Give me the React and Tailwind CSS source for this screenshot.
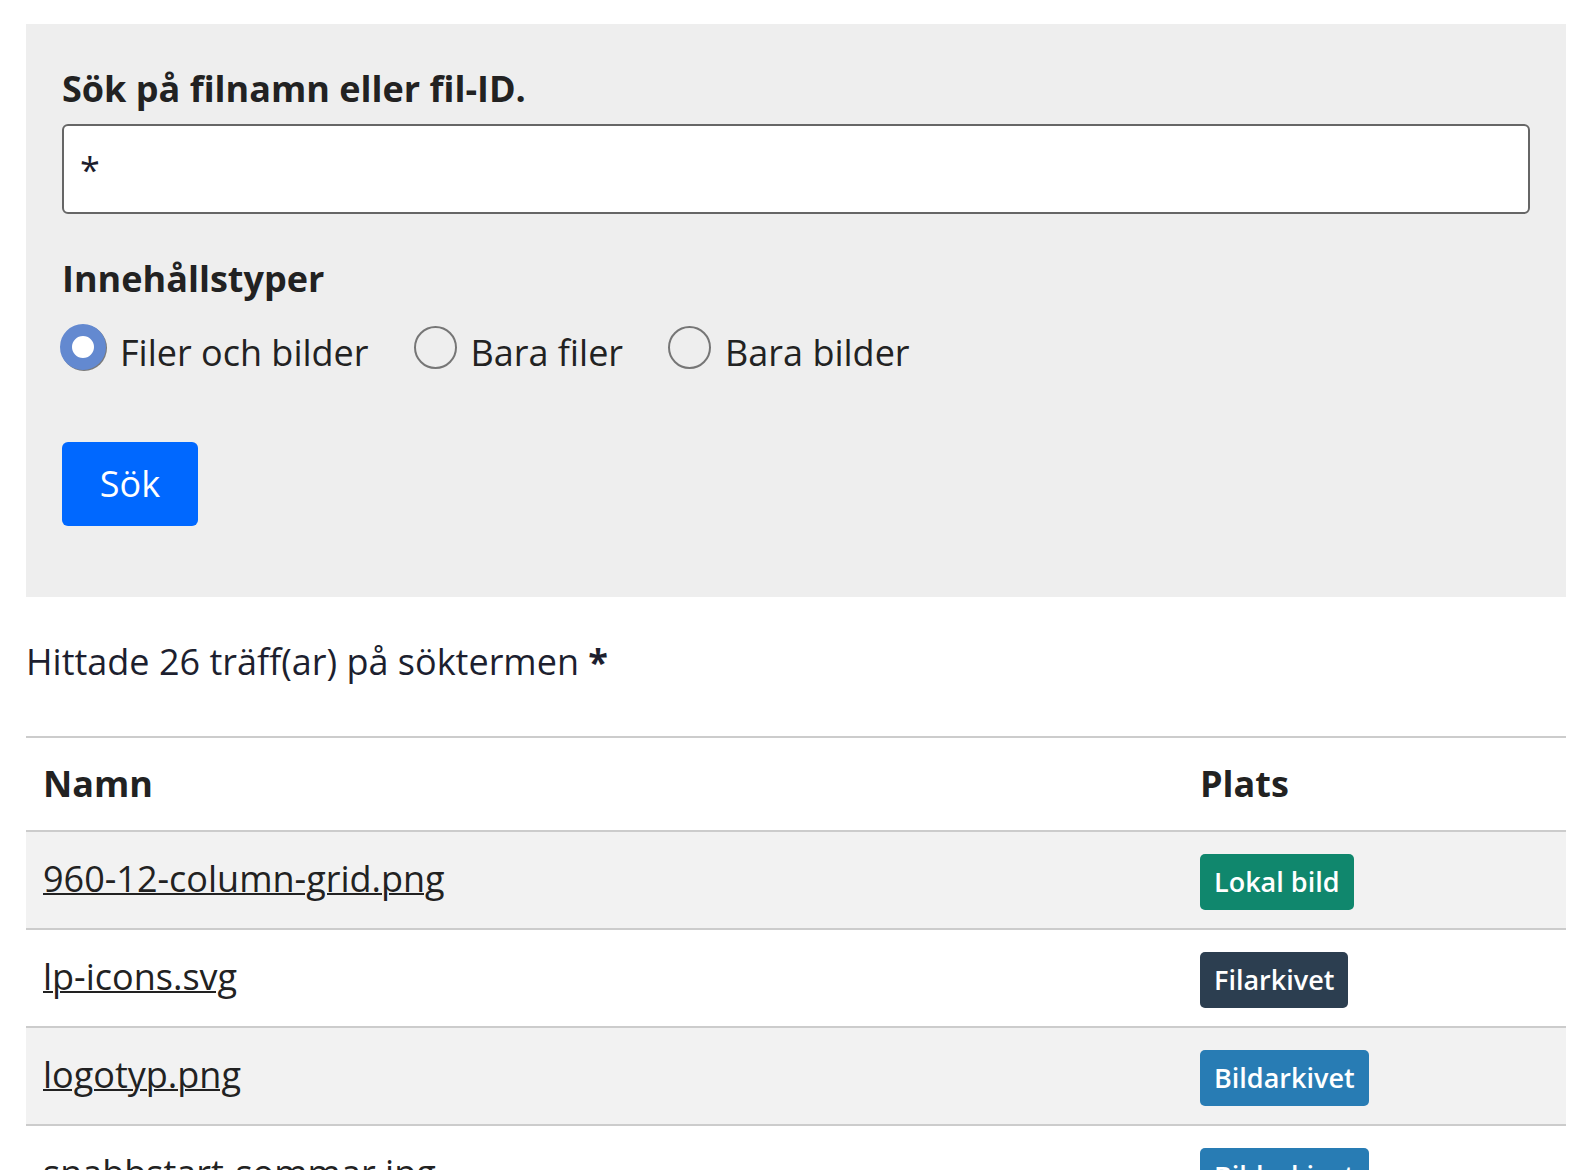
import React from 'react';

const rows = [
  { name: '960-12-column-grid.png', place: 'Lokal bild', color: 'bg-[#10876d]' },
  { name: 'lp-icons.svg', place: 'Filarkivet', color: 'bg-[#2c3e50]' },
  { name: 'logotyp.png', place: 'Bildarkivet', color: 'bg-[#287cb4]' },
  { name: 'snabbstart-sommar.jpg', place: 'Bildarkivet', color: 'bg-[#287cb4]' },
  { name: 'ikon-kalender.svg', place: 'Filarkivet', color: 'bg-[#2c3e50]' },
];

function Radio({ checked, label }) {
  return (
    <label className="flex items-start gap-[14px]">
      {checked ? (
        <span className="-ml-[2px] w-[46px] h-[46px] rounded-full border-[12px] border-[#6389d0] bg-white shadow-[1px_1px_0_#7a7a7a]" />
      ) : (
        <span className="mt-[2px] w-[43px] h-[43px] rounded-full border-2 border-[#767676]" />
      )}
      <span className="mt-[2px] text-[36px] leading-[54px] text-[#222]">{label}</span>
    </label>
  );
}

export default function App() {
  return (
    <div className="min-h-screen bg-white pt-[24px] pl-[26px] pr-[24px] font-['Open_Sans',sans-serif]">
      <div className="bg-[#eeeeee] px-[36px] pt-[38px] pb-[71px]">
        <div className="text-[36px] leading-[54px] font-bold text-[#222]">Sök på filnamn eller fil-ID.</div>
        <input
          readOnly
          defaultValue="*"
          className="mt-[8px] w-full h-[90px] border-2 border-[#666] rounded-[6px] bg-white px-[16px] text-[36px] leading-[54px] text-[#1c1d2e] outline-none"
        />

        <div className="mt-[38px] text-[36px] leading-[54px] font-bold text-[#222]">Innehållstyper</div>
        <div className="mt-[18px] flex items-start gap-[45px]">
          <Radio checked label="Filer och bilder" />
          <Radio label="Bara filer" />
          <Radio label="Bara bilder" />
        </div>

        <button className="mt-[62px] w-[136px] h-[84px] rounded-[6px] bg-[#0068ff] text-white text-[36px] leading-[54px]">
          Sök
        </button>
      </div>

      <p className="mt-[38px] text-[36px] leading-[54px] text-[#1d1f2f]">
        Hittade 26 träff(ar) på söktermen <strong className="font-bold">*</strong>
      </p>

      <table className="mt-[47px] w-full border-collapse">
        <thead>
          <tr className="border-t-2 border-b-2 border-[#cccccc]">
            <th className="w-[1157px] px-[17px] pt-[19px] pb-[19px] text-left text-[36px] leading-[54px] font-bold text-[#222]">Namn</th>
            <th className="px-[17px] pt-[19px] pb-[19px] text-left text-[36px] leading-[54px] font-bold text-[#222]">Plats</th>
          </tr>
        </thead>
        <tbody>
          {rows.map((r, i) => (
            <tr key={r.name} className={`border-b-2 border-[#cccccc] ${i % 2 === 0 ? 'bg-[#f2f2f2]' : 'bg-white'}`}>
              <td className="px-[17px] pt-[20px] pb-[22px] align-top text-[36px] leading-[54px]">
                <a href="#" className="text-[#222] underline decoration-2">{r.name}</a>
              </td>
              <td className="px-[17px] pt-[22px] pb-[18px] align-top">
                <span className={`inline-block ${r.color} rounded-[5px] px-[14px] py-[7px] text-[27px] leading-[42px] font-semibold text-white`}>
                  {r.place}
                </span>
              </td>
            </tr>
          ))}
        </tbody>
      </table>
    </div>
  );
}
